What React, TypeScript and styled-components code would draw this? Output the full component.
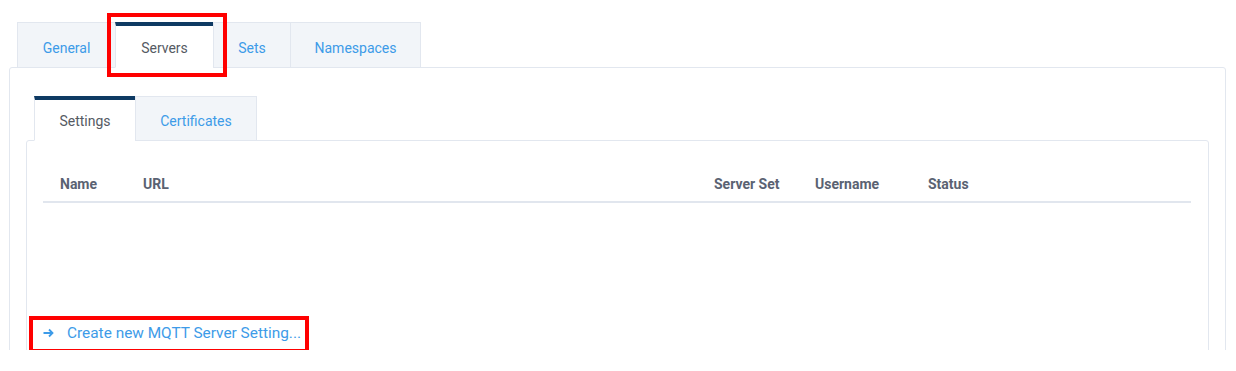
import React, { FC } from 'react';
import styled, { createGlobalStyle } from 'styled-components';

const GlobalStyle = createGlobalStyle`
  body {
    margin: 0;
    background: #ffffff;
    font-family: 'Source Sans Pro', Roboto, 'Liberation Sans', sans-serif;
  }
`;

const Page = styled.div`
  position: relative;
  width: 1236px;
  height: 350px;
  overflow: hidden;
  padding: 22px 10px 0 9px;
  box-sizing: border-box;
`;

const TabRow = styled.div`
  display: flex;
  margin-left: 8px;
  position: relative;
  z-index: 1;
  margin-bottom: -1px;
`;

const Tab = styled.div<{ active?: boolean; width: number; height: number }>`
  box-sizing: border-box;
  width: ${(p) => p.width}px;
  height: ${(p) => p.height}px;
  display: flex;
  align-items: center;
  justify-content: center;
  font-size: 14px;
  color: ${(p) => (p.active ? '#555a63' : '#3d9be8')};
  background: ${(p) => (p.active ? '#ffffff' : '#f2f5f9')};
  border: 1px solid #e2e7ef;
  border-top: ${(p) => (p.active ? '4px solid #0e3a63' : '1px solid #e2e7ef')};
  border-bottom: ${(p) => (p.active ? '1px solid #ffffff' : '1px solid #e2e7ef')};
  padding-top: ${(p) => (p.active ? '2px' : '5px')};
  & + & {
    margin-left: -1px;
  }
`;

const Panel = styled.div<{ inner?: boolean }>`
  border: 1px solid #e2e7ef;
  border-radius: 3px;
  background: #ffffff;
  padding: ${(p) => (p.inner ? '0 17px 0 16px' : '28px 16px 0 16px')};
  height: ${(p) => (p.inner ? '260px' : '320px')};
`;

const Table = styled.div`
  padding-top: 24px;
`;

const HeaderRow = styled.div`
  display: grid;
  grid-template-columns: 83px 571px 101px 113px 1fr;
  height: 36px;
  align-items: center;
  border-bottom: 2px solid #e1e6ee;
`;

const HeaderCell = styled.div`
  padding-left: 17px;
  padding-top: 2px;
  font-size: 14px;
  font-weight: 700;
  color: #5a6272;
`;

const CreateLink = styled.a`
  display: flex;
  align-items: center;
  margin-top: 121px;
  color: #3d9be8;
  font-size: 15.4px;
  text-decoration: none;
  svg {
    margin-right: 13px;
  }
`;

const Highlight = styled.div<{ x: number; y: number; w: number; h: number }>`
  position: absolute;
  left: ${(p) => p.x}px;
  top: ${(p) => p.y}px;
  width: ${(p) => p.w}px;
  height: ${(p) => p.h}px;
  border: 4px solid #ff0000;
  box-sizing: border-box;
  z-index: 5;
  pointer-events: none;
`;

const outerTabs = [
  { label: 'General', width: 99 },
  { label: 'Servers', width: 99, active: true },
  { label: 'Sets', width: 78 },
  { label: 'Namespaces', width: 131 },
];

const innerTabs = [
  { label: 'Settings', width: 102, active: true },
  { label: 'Certificates', width: 122 },
];

const columns = ['Name', 'URL', 'Server Set', 'Username', 'Status'];

const App: FC = () => (
  <>
    <GlobalStyle />
    <Page>
      <TabRow>
        {outerTabs.map((t) => (
          <Tab key={t.label} active={t.active} width={t.width} height={46}>
            {t.label}
          </Tab>
        ))}
      </TabRow>
      <Panel>
        <TabRow>
          {innerTabs.map((t) => (
            <Tab key={t.label} active={t.active} width={t.width} height={45}>
              {t.label}
            </Tab>
          ))}
        </TabRow>
        <Panel inner>
          <Table>
            <HeaderRow>
              {columns.map((c) => (
                <HeaderCell key={c}>{c}</HeaderCell>
              ))}
            </HeaderRow>
          </Table>
          <CreateLink href="#">
            <svg width="11" height="10" viewBox="0 0 11 10">
              <path d="M0.5 5h9M6 1.5L9.5 5 6 8.5" fill="none" stroke="#3d9be8" strokeWidth="1.8" />
            </svg>
            Create new MQTT Server Setting...
          </CreateLink>
        </Panel>
      </Panel>
      <Highlight x={107} y={13} w={120} h={64} />
      <Highlight x={29} y={316} w={280} h={37} />
    </Page>
  </>
);

export default App;
